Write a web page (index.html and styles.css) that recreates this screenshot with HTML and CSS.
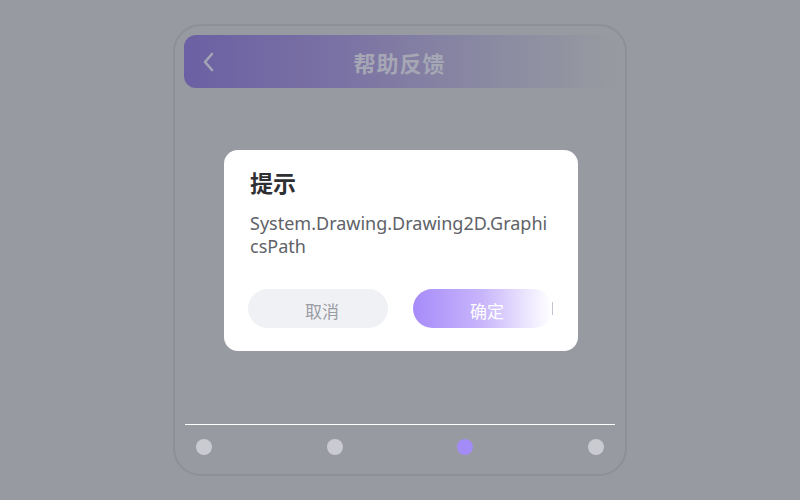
FILE: index.html
```html
<!DOCTYPE html>
<html lang="zh">
<head>
<meta charset="utf-8">
<link rel="stylesheet" href="styles.css">
</head>
<body>
<div class="stage">
  <div class="phone">
    <div class="header">
      <svg class="back" width="14" height="22" viewBox="0 0 14 22"><path d="M11 3 L4 11 L11 19" fill="none" stroke="#a3a4b4" stroke-width="2.6" stroke-linecap="round" stroke-linejoin="round"/></svg>
      <div class="title">帮助反馈</div>
    </div>
    <div class="content"></div>
    <div class="divider"></div>
    <div class="dots">
      <span class="dot"></span>
      <span class="dot"></span>
      <span class="dot active"></span>
      <span class="dot"></span>
    </div>
  </div>
</div>
<div class="dialog">
  <div class="dlg-title">提示</div>
  <div class="dlg-body">System.Drawing.Drawing2D.GraphicsPath</div>
  <div class="dlg-actions">
    <div class="btn cancel">取消</div>
    <div class="btn ok">确定<span class="edge"></span></div>
  </div>
</div>
</body>
</html>
```
FILE: styles.css
```css
html, body {
  margin: 0;
  padding: 0;
  width: 800px;
  height: 500px;
  overflow: hidden;
  background: #979aa0;
  font-family: "Noto Sans", "Noto Sans CJK SC", sans-serif;
}
.stage {
  width: 800px;
  height: 500px;
  display: flex;
  align-items: center;
  justify-content: center;
}
.phone {
  box-sizing: border-box;
  width: 454px;
  height: 452px;
  border: 2px solid #8d9097;
  border-radius: 28px;
  padding: 9px 10px 5px 9px;
  display: flex;
  flex-direction: column;
}
.header {
  height: 53px;
  border-radius: 12px;
  background: linear-gradient(90deg, #6b60a3 0%, #7a71a4 35%, #8a89a2 70%, #979aa0 100%);
  display: flex;
  align-items: center;
  position: relative;
}
.back {
  margin-left: 17px;
}
.title {
  position: absolute;
  left: 0;
  right: 0;
  text-align: center;
  font-size: 22px;
  font-weight: bold;
  color: #a6a7b5;
  font-family: "Noto Sans CJK SC", sans-serif;
  letter-spacing: 1px;
}
.content {
  flex: 1;
}
.divider {
  height: 1px;
  background: #ffffff;
  margin: 0 0 0 1px;
}
.dots {
  height: 44px;
  display: flex;
  justify-content: space-between;
  align-items: center;
  padding: 0 11px 0 12px;
}
.dot {
  width: 16px;
  height: 16px;
  border-radius: 50%;
  background: #c9cbd1;
}
.dot.active {
  background: #a48cf8;
}
.dialog {
  position: absolute;
  left: 224px;
  top: 150px;
  box-sizing: border-box;
  width: 354px;
  height: 201px;
  background: #ffffff;
  border-radius: 14px;
  padding: 17px 24px 0 24px;
}
.dlg-title {
  font-family: "Noto Sans CJK SC", sans-serif;
  font-size: 23px;
  font-weight: bold;
  color: #2f3034;
  line-height: 30px;
  padding-left: 2px;
}
.dlg-body {
  margin-top: 15px;
  padding: 0 2px;
  font-size: 18px;
  line-height: 23px;
  color: #606268;
  word-break: break-all;
}
.dlg-actions {
  margin-top: 31px;
  display: flex;
  gap: 25px;
}
.btn {
  width: 140px;
  height: 39px;
  border-radius: 20px;
  display: flex;
  align-items: center;
  justify-content: center;
  font-family: "Noto Sans CJK SC", sans-serif;
  font-size: 17px;
  padding: 3px 0 0 8px;
  box-sizing: border-box;
  position: relative;
}
.cancel {
  background: #f0f1f4;
  color: #9a9ca3;
}
.ok {
  background: linear-gradient(90deg, #a78bfa 0%, #c8b6fb 50%, #f6f3ff 90%, #ffffff 100%);
  color: #ffffff;
}
.edge {
  position: absolute;
  right: 0;
  top: 13px;
  width: 1px;
  height: 13px;
  background: #c4c1d2;
}
```
